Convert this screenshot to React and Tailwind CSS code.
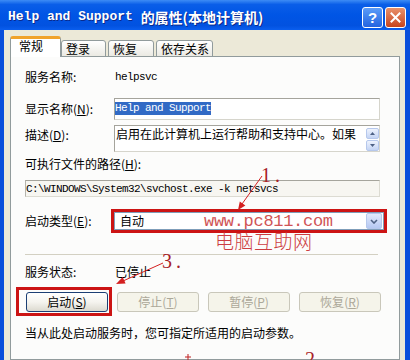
import React from 'react';

const cjk = "font-['Noto_Sans_CJK_SC',sans-serif]";
const mono = "font-['Liberation_Mono','Noto_Sans_CJK_SC',monospace]";

const Tab = ({ label, w, active, ml }) =>
  active ? (
    <div
      className={`relative z-10 ${w} h-[21px] bg-white border-x border-[#919b9c] border-t-[3px] border-t-[#f0a32c] rounded-t-[3px] pl-[8px] text-[12px] leading-[14px] ${ml}`}
    >
      {label}
    </div>
  ) : (
    <div
      className={`${w} h-[17px] border border-[#919b9c] rounded-t-[3px] bg-gradient-to-b from-white to-[#ebeae3] pl-[4px] pt-[1px] text-[12px] leading-[14px] ${ml}`}
    >
      {label}
    </div>
  );

const Btn = ({ text, k, disabled }) => (
  <div
    className={`w-[82px] h-[20px] rounded-[3px] flex items-center justify-center text-[12px] leading-[14px] ${
      disabled
        ? 'border border-[#c9c7ba] bg-[#f5f4ea] text-[#aca899]'
        : 'border border-[#1c3f74] bg-gradient-to-b from-white via-[#f5f4ef] to-[#dcdad0] text-black'
    }`}
  >
    {text}(<span className="underline">{k}</span>)
  </div>
);

export default function App() {
  return (
    <div className={`relative w-[410px] h-[360px] overflow-hidden flex flex-col bg-[#0a4fdb] ${cjk} text-black`}>
      {/* title bar */}
      <div className="h-[30px] shrink-0 flex items-center bg-[linear-gradient(to_bottom,#3d8cf5_0%,#0a5ee8_15%,#0055e5_50%,#0252e0_85%,#0a5eee_100%)] pl-[8px] pr-[4px]">
        <div className="flex-1 flex items-center text-white font-bold [text-shadow:1px_1px_0_#0a2a8c] pt-[3px]">
          <span className={`${mono} text-[13px] whitespace-pre`}>Help and Support </span>
          <span className={`${cjk} text-[14px] leading-[16px]`}>的属性(本地计算机)</span>
        </div>
        <div className="flex items-center gap-[2px] mt-[5px]">
          <div className="w-[21px] h-[21px] rounded-[3px] border border-white bg-gradient-to-b from-[#5b9cf8] to-[#2463e0] flex items-center justify-center text-white font-bold text-[15px] leading-none font-['Liberation_Sans',sans-serif]">
            ?
          </div>
          <div className="w-[21px] h-[21px] rounded-[3px] border border-white bg-gradient-to-b from-[#e8906a] to-[#c6431c] flex items-center justify-center">
            <svg width="11" height="11" viewBox="0 0 11 11">
              <path d="M1.5 1.5 L9.5 9.5 M9.5 1.5 L1.5 9.5" stroke="white" strokeWidth="2" strokeLinecap="square" />
            </svg>
          </div>
        </div>
      </div>

      {/* body */}
      <div className="flex-1 flex">
        <div className="w-[4px] shrink-0 bg-[#0a4fdb]" />
        <div className="flex-1 bg-[#ece9d8] pt-[6px] flex flex-col">
          <div className="flex items-end h-[21px] pl-[6px]">
            <Tab label="常规" w="w-[51px]" active ml="" />
            <Tab label="登录" w="w-[45px]" ml="" />
            <Tab label="恢复" w="w-[46px]" ml="ml-[2px]" />
            <Tab label="依存关系" w="w-[57px]" ml="ml-[2px]" />
          </div>
          <div className="-mt-px ml-[6px] mr-[5px] flex-1 border border-[#919b9c] bg-[#fcfcfb] pl-[14px] flex flex-col text-[12px] leading-[14px]">
            <div className="mt-[13px] h-[14px] flex items-center">
              <div className="w-[90px]">服务名称:</div>
              <div className={`${mono} text-[11px] tracking-[-0.6px]`}>helpsvc</div>
            </div>

            <div className="mt-[14px] h-[22px] flex items-center">
              <div className="w-[89px]">
                显示名称(<span className="underline">N</span>):
              </div>
              <div className="w-[266px] h-full border border-[#d6d5cc] border-t-[#a5a49c] border-l-[#a5a49c] bg-white">
                <span className={`${mono} inline-block text-[11px] tracking-[-0.6px] leading-[13px] bg-[#316ac5] text-white`}>
                  Help and Support
                </span>
              </div>
            </div>

            <div className="mt-[5px] h-[27px] flex items-start">
              <div className="w-[89px] pt-[3px]">
                描述(<span className="underline">D</span>):
              </div>
              <div className="w-[266px] h-full border border-[#d6d5cc] border-t-[#a5a49c] border-l-[#a5a49c] bg-white flex">
                <div className="flex-1 pl-[1px] pt-[1px]">启用在此计算机上运行帮助和支持中心。如果</div>
                <div className="w-[13px] pt-[2px] flex flex-col gap-[1px]">
                  <div className="h-[11px] rounded-[2px] border border-[#b6c8ec] bg-gradient-to-b from-[#eef3fd] to-[#c4d4f4] flex items-center justify-center">
                    <svg width="5" height="3" viewBox="0 0 5 3"><path d="M0 3 L2.5 0 L5 3 Z" fill="#4d6185" /></svg>
                  </div>
                  <div className="h-[11px] rounded-[2px] border border-[#b6c8ec] bg-gradient-to-b from-[#eef3fd] to-[#c4d4f4] flex items-center justify-center">
                    <svg width="5" height="3" viewBox="0 0 5 3"><path d="M0 0 L2.5 3 L5 0 Z" fill="#4d6185" /></svg>
                  </div>
                </div>
              </div>
            </div>

            <div className="mt-[5px] h-[14px] flex items-center">
              可执行文件的路径(<span className="underline">H</span>):
            </div>

            <div className="mt-[9px] h-[17px] w-[355px] border border-[#dcdbd2] border-t-[#a5a49c] border-l-[#b5b4ac] bg-[#f7f6f1] flex items-center">
              <span className={`${mono} text-[11px] tracking-[-0.6px] whitespace-pre`}>
                C:\WINDOWS\System32\svchost.exe -k netsvcs
              </span>
            </div>

            <div className="mt-[12px] h-[24px] flex items-center">
              <div className="w-[86px]">
                启动类型(<span className="underline">E</span>):
              </div>
              <div className="w-[276px] h-[24px] border-[3px] border-[#cc1414]">
                <div className="h-full border border-[#7f9db9] bg-white flex items-center pl-[5px]">
                  <div className="flex-1">自动</div>
                  <div className="w-[16px] h-[16px] mr-[1px] rounded-[2px] border border-[#b6c8ec] bg-gradient-to-b from-[#e3ebfc] to-[#b5c8f2] flex items-center justify-center">
                    <svg width="8" height="5" viewBox="0 0 8 5">
                      <path d="M1 1 L4 4 L7 1" stroke="#4d6185" strokeWidth="1.6" fill="none" />
                    </svg>
                  </div>
                </div>
              </div>
            </div>

            <div className="mt-[21px] h-px w-[353px] bg-[#d3d0c2]" />

            <div className="mt-[10px] h-[14px] flex items-center">
              <div className="w-[90px]">服务状态:</div>
              <div>已停止</div>
            </div>

            <div className="mt-[13px] h-[20px] flex gap-[9px] pl-[1px]">
              <Btn text="启动" k="S" />
              <Btn text="停止" k="T" disabled />
              <Btn text="暂停" k="P" disabled />
              <Btn text="恢复" k="R" disabled />
            </div>

            <div className="mt-[14px] h-[14px] flex items-center">当从此处启动服务时，您可指定所适用的启动参数。</div>
          </div>
        </div>
        <div className="w-[5px] shrink-0 bg-[#0a4fdb]" />
      </div>

      {/* annotations laid over the dialog */}
      <div className={`absolute left-[204px] top-[213px] ${mono} text-[17px] leading-[17px] tracking-[-0.3px] text-[#d05456]`}>
        www.pc811.com
      </div>
      <div className={`absolute left-[215px] top-[231px] ${cjk} font-light text-[19px] leading-[20px] tracking-[0.5px] text-[#cc3e42]`}>
        电脑互助网
      </div>
      <div className="absolute left-[16px] top-[287px] w-[96px] h-[29px] border-[3px] border-[#cc1414]" />
      <div className="absolute left-[261px] top-[165px] font-['Liberation_Serif',serif] text-[20px] leading-[20px] tracking-[4px] text-[#a82228]">
        1.
      </div>
      <div className="absolute left-[162px] top-[251px] font-['Liberation_Serif',serif] text-[20px] leading-[20px] tracking-[4px] text-[#a82228]">
        3.
      </div>
      <div className="absolute left-[305px] top-[349px] font-['Liberation_Serif',serif] text-[20px] leading-[20px] text-[#a82228]">
        2
      </div>
      <svg className="absolute left-0 top-0 pointer-events-none" width="410" height="360" viewBox="0 0 410 360">
        <line x1="262" y1="176" x2="242" y2="204" stroke="#d42020" strokeWidth="1" />
        <polygon points="238,210 245.4,205.5 239.8,201.5" fill="#d42020" />
        <line x1="163" y1="263" x2="123" y2="281" stroke="#d42020" strokeWidth="1" />
        <polygon points="116,284 125.6,283.5 122.7,277.1" fill="#d42020" />
        <line x1="188" y1="354" x2="188" y2="360" stroke="#c02020" strokeWidth="1" />
        <line x1="185" y1="357" x2="191" y2="357" stroke="#c02020" strokeWidth="1" />
      </svg>
    </div>
  );
}
